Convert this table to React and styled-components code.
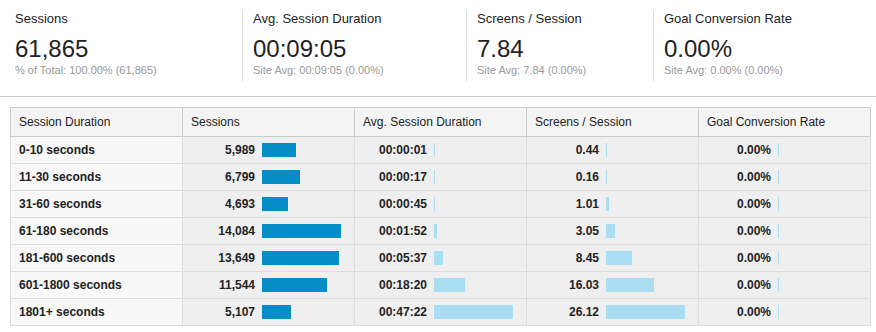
import styled, { createGlobalStyle } from "styled-components";

const GlobalStyle = createGlobalStyle`
  body {
    margin: 0;
    background: #fff;
    font-family: Arial, "Liberation Sans", sans-serif;
    color: #222;
  }
`;

const metrics = [
  { title: "Sessions", value: "61,865", note: "% of Total: 100.00% (61,865)", width: 242 },
  { title: "Avg. Session Duration", value: "00:09:05", note: "Site Avg: 00:09:05 (0.00%)", width: 224 },
  { title: "Screens / Session", value: "7.84", note: "Site Avg: 7.84 (0.00%)", width: 187 },
  { title: "Goal Conversion Rate", value: "0.00%", note: "Site Avg: 0.00% (0.00%)", width: 223 },
];

const rows = [
  ["0-10 seconds", 5989, 1, 0.44],
  ["11-30 seconds", 6799, 17, 0.16],
  ["31-60 seconds", 4693, 45, 1.01],
  ["61-180 seconds", 14084, 112, 3.05],
  ["181-600 seconds", 13649, 337, 8.45],
  ["601-1800 seconds", 11544, 1100, 16.03],
  ["1801+ seconds", 5107, 2842, 26.12],
];

const fmtTime = (s) => {
  const p = (n) => String(n).padStart(2, "0");
  return `${p(Math.floor(s / 3600))}:${p(Math.floor((s % 3600) / 60))}:${p(s % 60)}`;
};

const BAR_MAX = 79;
const maxSessions = 14084;
const maxTime = 2842;
const maxScreens = 26.12;

const barWidth = (v, max) => Math.max(1, Math.round((v / max) * BAR_MAX));

const App = () => {
  return (
    <>
      <GlobalStyle />
      <Summary>
        {metrics.map((m, i) => (
          <Metric key={m.title} style={{ width: m.width }}>
            <MetricInner first={i === 0}>
              <MetricTitle>{m.title}</MetricTitle>
              <MetricValue>{m.value}</MetricValue>
              <MetricNote>{m.note}</MetricNote>
            </MetricInner>
          </Metric>
        ))}
      </Summary>
      <TableWrap>
        <Table>
          <thead>
            <tr>
              <Th>Session Duration</Th>
              <Th>Sessions</Th>
              <Th>Avg. Session Duration</Th>
              <Th>Screens / Session</Th>
              <Th>Goal Conversion Rate</Th>
            </tr>
          </thead>
          <tbody>
            {rows.map(([label, sessions, time, screens]) => (
              <tr key={label}>
                <LabelCell>{label}</LabelCell>
                <Td>
                  <Cell>
                    <Num>{sessions.toLocaleString("en-US")}</Num>
                    <Bar dark style={{ width: barWidth(sessions, maxSessions) }} />
                  </Cell>
                </Td>
                <Td>
                  <Cell>
                    <Num>{fmtTime(time)}</Num>
                    <Bar style={{ width: barWidth(time, maxTime) }} />
                  </Cell>
                </Td>
                <Td>
                  <Cell>
                    <Num>{screens.toFixed(2)}</Num>
                    <Bar style={{ width: barWidth(screens, maxScreens) }} />
                  </Cell>
                </Td>
                <Td>
                  <Cell>
                    <Num>0.00%</Num>
                    <Bar style={{ width: 1 }} />
                  </Cell>
                </Td>
              </tr>
            ))}
          </tbody>
        </Table>
      </TableWrap>
    </>
  );
};

export default App;

const Summary = styled.div`
  display: flex;
  height: 97px;
  border-bottom: 1px solid #ccc;
  padding-top: 11px;
  box-sizing: border-box;
`;

const Metric = styled.div`
  flex: none;
`;

const MetricInner = styled.div`
  border-left: ${(p) => (p.first ? "none" : "1px solid #ddd")};
  padding-left: ${(p) => (p.first ? "15px" : "10px")};
  height: 70px;
  box-sizing: border-box;
`;

const MetricTitle = styled.div`
  font-size: 13px;
  line-height: 15px;
  color: #222;
`;

const MetricValue = styled.div`
  font-size: 24px;
  line-height: 28px;
  margin-top: 9px;
  color: #222;
`;

const MetricNote = styled.div`
  font-size: 11px;
  line-height: 13px;
  margin-top: 1px;
  color: #999;
`;

const TableWrap = styled.div`
  padding: 10px 6px 0 10px;
`;

const Table = styled.table`
  border-collapse: collapse;
  table-layout: fixed;
  width: 861px;
  border: 1px solid #ccc;
  font-size: 12px;
`;

const Th = styled.th`
  width: 172px;
  height: 29px;
  padding: 0 0 0 8px;
  text-align: left;
  font-weight: normal;
  font-size: 12px;
  color: #222;
  background: #f4f4f4;
  border: 1px solid #ccc;
  box-sizing: border-box;
`;

const Td = styled.td`
  height: 26px;
  padding: 0;
  background: #efefef;
  border: 1px solid #ddd;
  font-weight: bold;
  color: #222;
`;

const LabelCell = styled(Td)`
  background: #f8f8f8;
  padding-left: 8px;
`;

const Cell = styled.div`
  display: flex;
  align-items: center;
  gap: 7px;
`;

const Num = styled.span`
  width: 72px;
  text-align: right;
  flex: none;
`;

const Bar = styled.span`
  display: block;
  height: 14px;
  background: ${(p) => (p.dark ? "#058dc7" : "#aadff3")};
`;
